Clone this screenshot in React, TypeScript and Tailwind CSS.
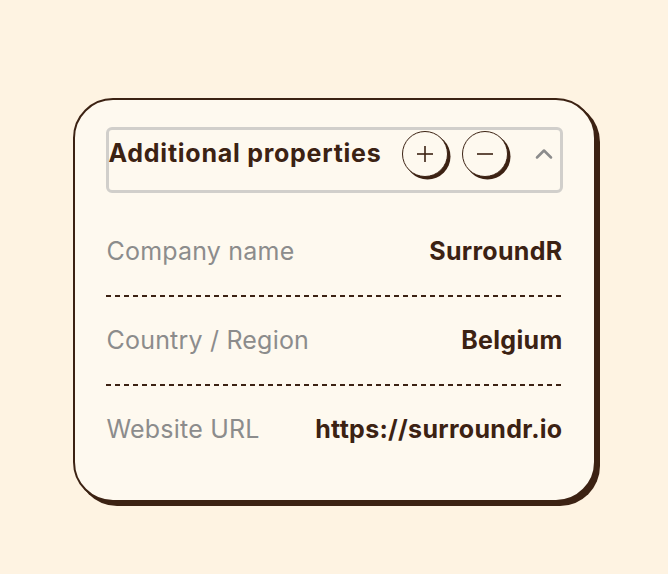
import { ChevronUp } from "lucide-react";

const rows = [
  { label: "Company name", value: "SurroundR" },
  { label: "Country / Region", value: "Belgium" },
  { label: "Website URL", value: "https://surroundr.io" },
];

function RoundButton({ minus }: { minus?: boolean }) {
  return (
    <button className="flex h-[46px] w-[46px] items-center justify-center rounded-full border-[1.5px] border-[#3c2213] bg-[#fef9ef] shadow-[2.5px_2.5px_0_#3c2213]">
      <svg width="20" height="20" viewBox="0 0 20 20" fill="none" stroke="#3c2213" strokeWidth="1.6">
        <line x1="2" y1="10" x2="18" y2="10" />
        {!minus && <line x1="10" y1="2" x2="10" y2="18" />}
      </svg>
    </button>
  );
}

export default function App() {
  return (
    <div
      className="flex min-h-screen justify-center bg-[#fef3e2] pt-[98px]"
      style={{ fontFamily: "Inter, 'Noto Sans', sans-serif" }}
    >
      <div className="h-[404px] w-[523px] rounded-[40px] border-2 border-[#3c2213] bg-[#fef9ef] px-[31px] pt-[27px] shadow-[4px_4px_0_#3c2213]">
        <div className="h-[66px] rounded-[6px] border-[3px] border-[#d1cfcb]">
          <div className="flex h-[47px] items-center">
            <h2 className="text-[25px] font-bold tracking-[0.75px] text-[#3c2213]">
              Additional properties
            </h2>
            <div className="ml-[21px] flex gap-[14px]">
              <RoundButton />
              <RoundButton minus />
            </div>
            <ChevronUp className="ml-auto mr-[2px] h-[28px] w-[28px] text-[#8c8c8c]" strokeWidth={2.2} />
          </div>
        </div>

        <div className="mt-[15px]">
          {rows.map((row, i) => (
            <div key={row.label}>
              {i > 0 && (
                <div className="h-[2px] bg-[repeating-linear-gradient(to_right,#3c2213_0_5px,transparent_5px_9px)]" />
              )}
              <div className="flex h-[87px] items-center justify-between pl-[1px]">
                <span className="text-[25px] tracking-[0.2px] text-[#8c8c8c]">{row.label}</span>
                <span className="text-[25px] font-bold tracking-[0.3px] text-[#3c2213]">{row.value}</span>
              </div>
            </div>
          ))}
        </div>
      </div>
    </div>
  );
}
